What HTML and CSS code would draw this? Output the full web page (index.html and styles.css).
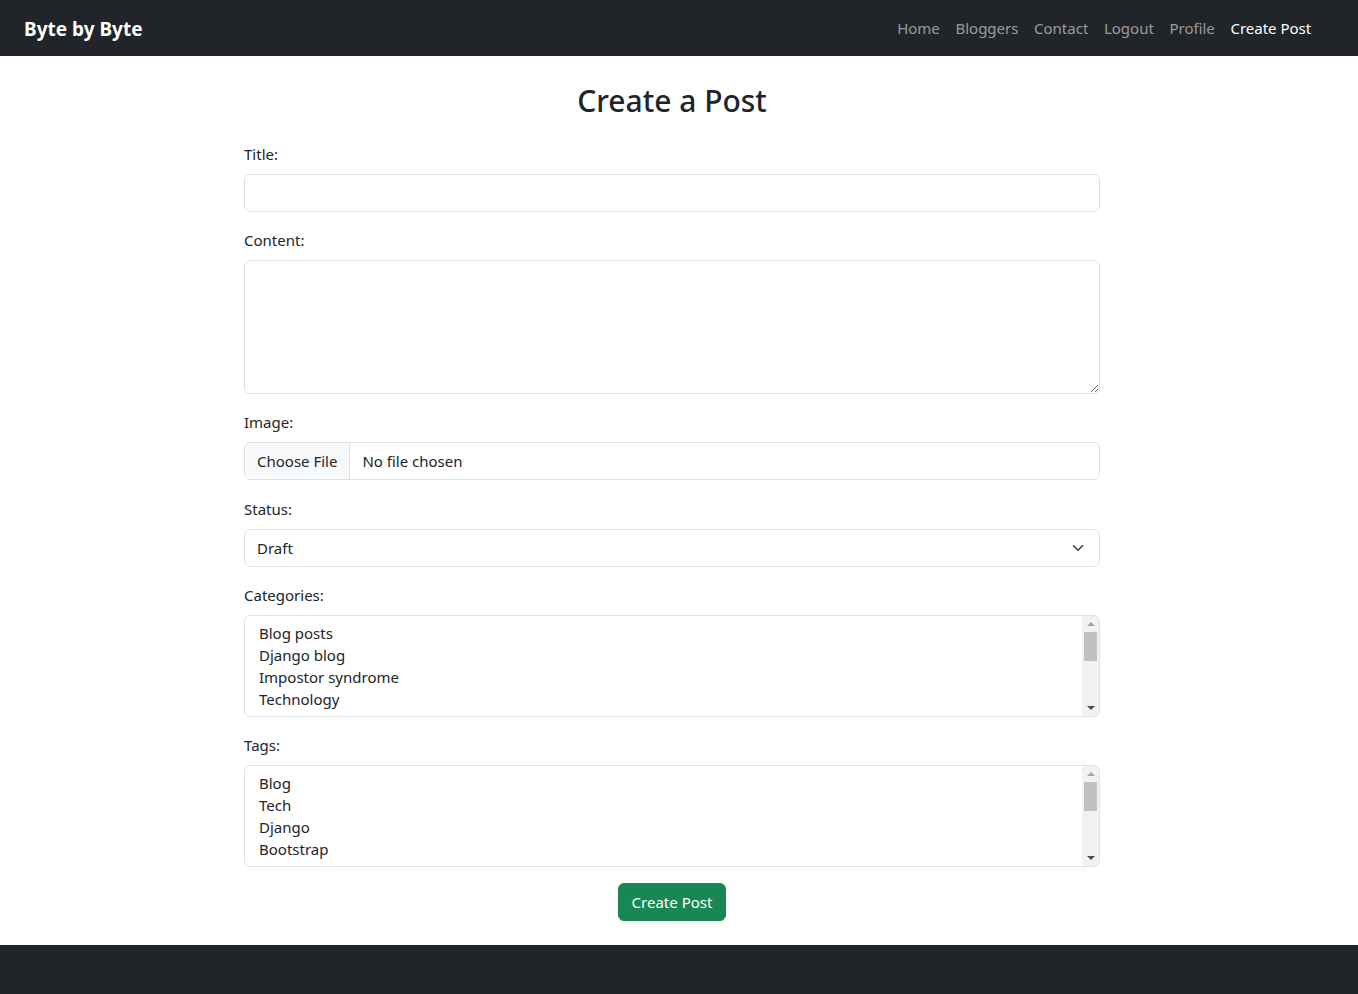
FILE: index.html
```html
<!DOCTYPE html>
<html lang="en">
<head>
<meta charset="utf-8">
<title>Create a Post - Byte by Byte</title>
<link rel="stylesheet" href="styles.css">
</head>
<body>
<nav class="navbar">
  <a class="brand" href="#">Byte by Byte</a>
  <ul class="nav">
    <li><a class="nav-link" href="#">Home</a></li>
    <li><a class="nav-link" href="#">Bloggers</a></li>
    <li><a class="nav-link" href="#">Contact</a></li>
    <li><a class="nav-link" href="#">Logout</a></li>
    <li><a class="nav-link" href="#">Profile</a></li>
    <li><a class="nav-link active" href="#">Create Post</a></li>
  </ul>
</nav>
<main class="page">
  <div class="container">
    <h2 class="title">Create a Post</h2>
    <form class="post-form">
      <div class="group">
        <label class="label" for="title">Title:</label>
        <input class="control" id="title" type="text">
      </div>
      <div class="group">
        <label class="label" for="content">Content:</label>
        <textarea class="control textarea" id="content" rows="5"></textarea>
      </div>
      <div class="group group-file">
        <label class="label" for="image">Image:</label>
        <input class="control file" id="image" type="file">
      </div>
      <div class="group">
        <label class="label" for="status">Status:</label>
        <select class="control select" id="status">
          <option>Draft</option>
          <option>Published</option>
        </select>
      </div>
      <div class="group">
        <span class="label">Categories:</span>
        <div class="listbox" role="listbox">
          <div class="list-items">
            <div class="option">Blog posts</div>
            <div class="option">Django blog</div>
            <div class="option">Impostor syndrome</div>
            <div class="option">Technology</div>
            <div class="option">Life</div>
          </div>
          <div class="scrollbar">
            <span class="arrow up"></span>
            <span class="thumb"></span>
            <span class="arrow down"></span>
          </div>
        </div>
      </div>
      <div class="group">
        <span class="label">Tags:</span>
        <div class="listbox" role="listbox">
          <div class="list-items">
            <div class="option">Blog</div>
            <div class="option">Tech</div>
            <div class="option">Django</div>
            <div class="option">Bootstrap</div>
          </div>
          <div class="scrollbar">
            <span class="arrow up"></span>
            <span class="thumb"></span>
            <span class="arrow down"></span>
          </div>
        </div>
      </div>
      <div class="actions">
        <button class="btn" type="submit">Create Post</button>
      </div>
    </form>
  </div>
</main>
<footer class="footer"></footer>
</body>
</html>
```
FILE: styles.css
```css
* { box-sizing: border-box; }

body {
  margin: 0;
  font-family: "Noto Sans", "Open Sans", sans-serif;
  font-size: 15px;
  line-height: 24px;
  color: #212529;
  background: #fff;
}

.navbar {
  height: 56px;
  background: #212529;
  display: flex;
  align-items: center;
  justify-content: space-between;
  padding: 0 39px 0 24px;
}

.brand {
  color: #fff;
  font-weight: 700;
  font-size: 19px;
  text-decoration: none;
  line-height: 30px;
  margin-top: 2px;
}

.nav {
  list-style: none;
  margin: 0;
  padding: 0;
  display: flex;
}

.nav-link {
  display: block;
  padding: 8px 7.8px;
  color: rgba(255, 255, 255, 0.55);
  text-decoration: none;
  font-size: 15px;
}

.nav-link.active { color: #fff; }

.page {
  padding-right: 14px;
}

.container {
  width: 856px;
  margin: 0 auto;
}

.title {
  margin: 26px 0 22px;
  text-align: center;
  font-size: 30px;
  line-height: 38px;
  font-weight: 500;
}

.group { margin-bottom: 16px; }

.group-file { margin-bottom: 17px; }

.label {
  display: block;
  margin-bottom: 8px;
  line-height: 24px;
}

.control {
  display: block;
  width: 100%;
  height: 38px;
  padding: 6px 12px;
  font: inherit;
  color: #212529;
  background: #fff;
  border: 1px solid #dee2e6;
  border-radius: 6px;
  outline: none;
}

.textarea {
  height: 134px;
  resize: vertical;
}

.file {
  overflow: hidden;
  padding: 6px 12px;
}

.file::file-selector-button {
  padding: 6px 12px;
  margin: -6px 12px -6px -12px;
  height: 36px;
  font: inherit;
  color: #212529;
  background: #f8f9fa;
  border: 0;
  border-right: 1px solid #dee2e6;
  border-radius: 0;
}

.select {
  appearance: none;
  -webkit-appearance: none;
  padding-right: 36px;
  background-image: url("data:image/svg+xml,%3csvg xmlns='http://www.w3.org/2000/svg' viewBox='0 0 16 16'%3e%3cpath fill='none' stroke='%23343a40' stroke-linecap='round' stroke-linejoin='round' stroke-width='2' d='m2 5 6 6 6-6'/%3e%3c/svg%3e");
  background-repeat: no-repeat;
  background-position: right 14px center;
  background-size: 14px 12px;
}

.listbox {
  display: flex;
  height: 102px;
  border: 1px solid #dee2e6;
  border-radius: 6px;
  overflow: hidden;
}

.list-items {
  flex: 1;
  padding: 6px 12px;
  overflow: hidden;
}

.option {
  padding: 0 2px;
  height: 22px;
  line-height: 22px;
  white-space: nowrap;
}

.scrollbar {
  width: 17px;
  background: #f1f1f1;
  display: flex;
  flex-direction: column;
  align-items: center;
}

.arrow {
  width: 0;
  height: 0;
  border-left: 4px solid transparent;
  border-right: 4px solid transparent;
}

.arrow.up {
  margin-top: 6px;
  border-bottom: 4px solid #a3a3a3;
}

.arrow.down {
  margin-top: auto;
  margin-bottom: 6px;
  border-top: 4px solid #505050;
}

.thumb {
  width: 13px;
  height: 29px;
  margin-top: 6px;
  background: #c1c1c1;
}

.actions {
  text-align: center;
}

.btn {
  height: 38px;
  padding: 6px 13px;
  font: inherit;
  color: #fff;
  background: #198754;
  border: 1px solid #198754;
  border-radius: 6px;
}

.footer {
  margin-top: 24px;
  height: 49px;
  background: #212529;
}
```
